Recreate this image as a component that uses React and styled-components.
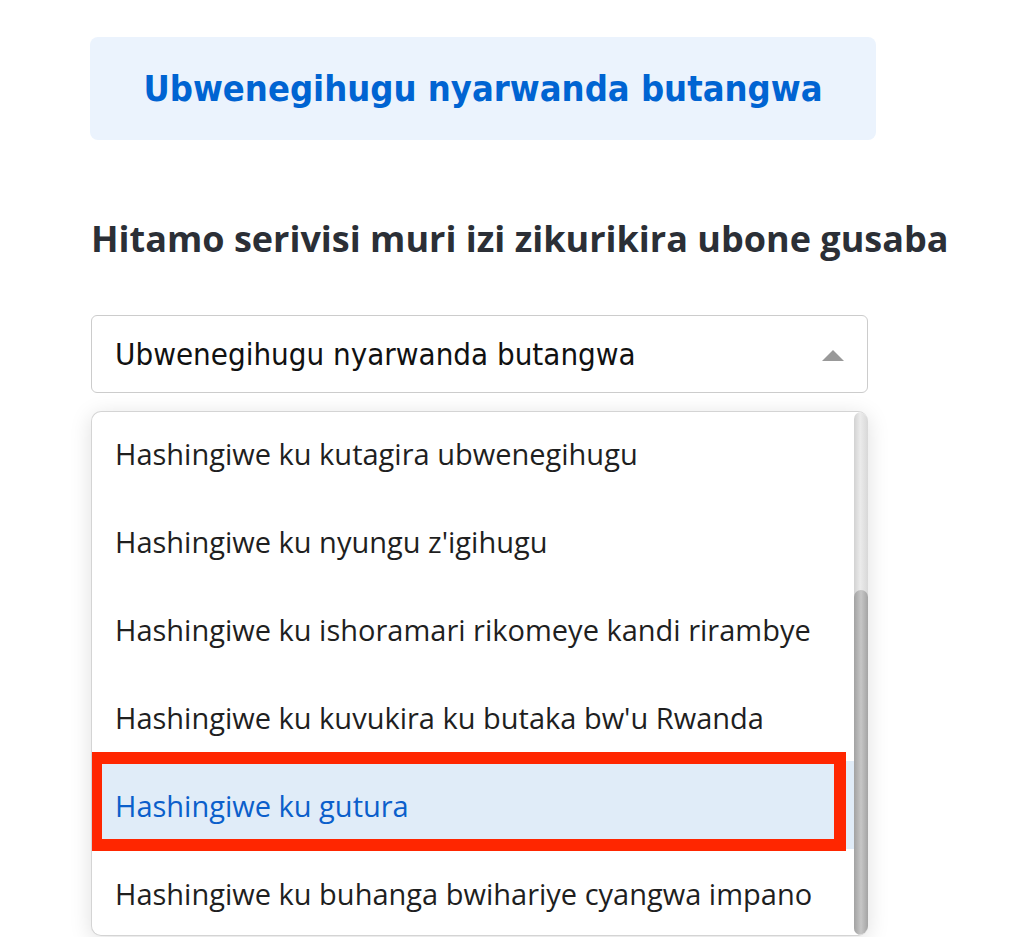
import React from 'react'
import styled, { createGlobalStyle } from 'styled-components'

const GlobalStyle = createGlobalStyle`
  html, body {
    margin: 0;
    padding: 0;
    background: #ffffff;
  }
  body {
    font-family: "Open Sans", sans-serif;
  }
`

const Page = styled.div`
  width: 1011px;
  height: 937px;
  overflow: hidden;
  padding: 37px 0 0 90px;
  box-sizing: border-box;
`

const Banner = styled.div`
  width: 786px;
  height: 103px;
  display: flex;
  align-items: center;
  justify-content: center;
  background: #ebf3fd;
  border-radius: 8px;
`

const BannerText = styled.h1`
  margin: 0;
  font-family: "DejaVu Sans Condensed", "DejaVu Sans", sans-serif;
  font-stretch: condensed;
  font-weight: 700;
  font-size: 36px;
  color: #0064d2;
`

const Heading = styled.h2`
  margin: 77px 0 0 1px;
  font-family: "Open Sans", sans-serif;
  font-weight: 700;
  font-size: 36px;
  line-height: 44px;
  color: #2b2f36;
  white-space: nowrap;
`

const Select = styled.div`
  margin: 54px 0 0 1px;
  width: 777px;
  height: 78px;
  box-sizing: border-box;
  border: 1px solid #cccccc;
  border-radius: 6px;
  display: flex;
  align-items: center;
  justify-content: space-between;
  padding: 0 23px 0 23px;
`

const SelectValue = styled.span`
  font-family: "DejaVu Sans Condensed", "DejaVu Sans", sans-serif;
  font-stretch: condensed;
  font-size: 31px;
  color: #111111;
`

const Caret = styled.span`
  margin-top: 2px;
  width: 0;
  height: 0;
  border-left: 11px solid transparent;
  border-right: 11px solid transparent;
  border-bottom: 11px solid #999999;
`

const Menu = styled.div`
  margin: 18px 0 0 1px;
  width: 777px;
  height: 525px;
  box-sizing: border-box;
  border: 1px solid #d4d4d4;
  border-right: none;
  border-radius: 10px;
  background: #ffffff;
  box-shadow: 0 4px 22px rgba(0, 0, 0, 0.13);
  display: flex;
  overflow: hidden;
`

const Options = styled.ul`
  list-style: none;
  margin: -3px 0 0 0;
  padding: 0;
  flex: 1;
`

const Option = styled.li`
  position: relative;
  height: 88px;
  display: flex;
  align-items: center;
  padding: 0 0 0 23px;
  box-sizing: border-box;
  font-family: "Open Sans", sans-serif;
  font-size: 29px;
  white-space: nowrap;
  color: ${p => (p.$active ? '#0b5fcb' : '#1f1f1f')};
  background: ${p => (p.$active ? '#e0ecf8' : 'transparent')};

  ${p => p.$marked && `
    &::after {
      content: '';
      position: absolute;
      left: -2px;
      right: 8px;
      top: -9px;
      bottom: -2px;
      border: 12px solid #ff2600;
    }
  `}
`

const Track = styled.div`
  width: 14px;
  display: flex;
  flex-direction: column;
  background: linear-gradient(to right, #d2d2d2, #ebebeb 45%, #d8d8d8);
  border-radius: 7px;
`

const Thumb = styled.div`
  margin-top: 178px;
  flex: 1;
  background: linear-gradient(to right, #a2a2a2, #c6c6c6 50%, #a4a4a4);
  border-radius: 7px;
`

const items = [
  'Hashingiwe ku kutagira ubwenegihugu',
  "Hashingiwe ku nyungu z'igihugu",
  'Hashingiwe ku ishoramari rikomeye kandi rirambye',
  "Hashingiwe ku kuvukira ku butaka bw'u Rwanda",
  'Hashingiwe ku gutura',
  'Hashingiwe ku buhanga bwihariye cyangwa impano',
]

export default function App() {
  return (
    <Page>
      <GlobalStyle />
      <Banner>
        <BannerText>Ubwenegihugu nyarwanda butangwa</BannerText>
      </Banner>
      <Heading>Hitamo serivisi muri izi zikurikira ubone gusaba</Heading>
      <Select>
        <SelectValue>Ubwenegihugu nyarwanda butangwa</SelectValue>
        <Caret />
      </Select>
      <Menu>
        <Options>
          {items.map((item, i) => (
            <Option key={item} $active={i === 4} $marked={i === 4}>
              {item}
            </Option>
          ))}
        </Options>
        <Track>
          <Thumb />
        </Track>
      </Menu>
    </Page>
  )
}
